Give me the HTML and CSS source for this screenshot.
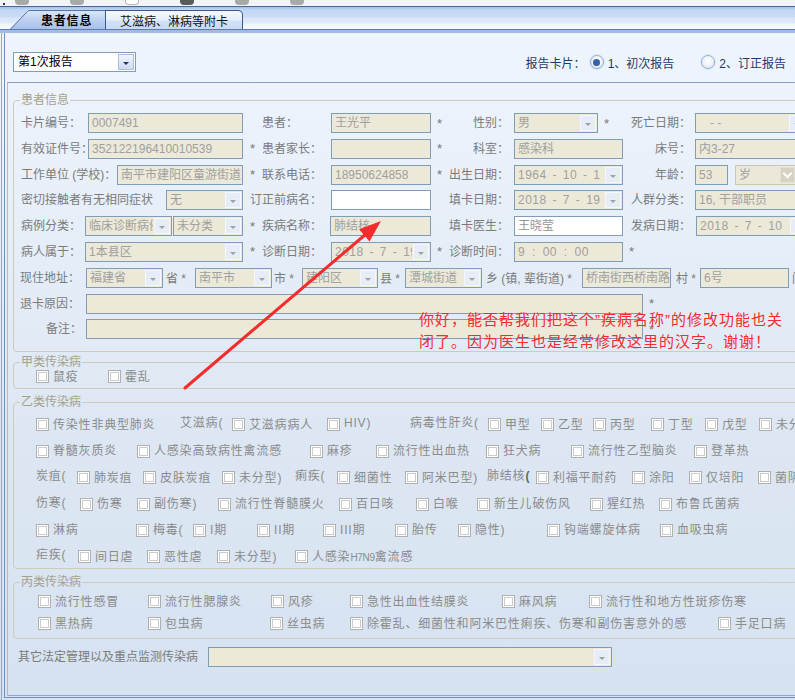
FILE: index.html
```html
<!DOCTYPE html>
<html lang="zh-CN">
<head>
<meta charset="utf-8">
<title>患者信息</title>
<link rel="stylesheet" href="styles.css">
</head>
<body>
<div class="toolbar">
  <span class="tb-dot"></span>
  <span class="tb tb-first"></span>
  <span class="tb"></span>
  <span class="tb tb-white"></span>
  <span class="tb tb-dark"></span>
  <span class="tb"></span>
  <span class="tb"></span>
</div>
<div class="tabstrip">
  <div class="tab tab-active">
    <svg class="tab-shape" width="95" height="19" viewBox="0 0 95 19">
      <defs>
        <linearGradient id="tg" x1="0" y1="0" x2="0" y2="1">
          <stop offset="0" stop-color="#dae7f9"/>
          <stop offset="0.5" stop-color="#bcd1f0"/>
          <stop offset="1" stop-color="#a7c1ea"/>
        </linearGradient>
      </defs>
      <path d="M0,19 L17.5,1.5 Q18.5,0.5 20,0.5 L95,0.5 L95,19 Z" fill="url(#tg)"/>
      <path d="M0.5,19 L17.5,1.5 Q18.5,0.5 20,0.5 L95,0.5" fill="none" stroke="#5673a8" stroke-width="1"/>
    </svg>
    <span class="tab-label">患者信息</span>
  </div>
  <div class="tab tab-second"><span>艾滋病、淋病等附卡</span></div>
</div>
<div class="tabpage">
  <div class="band"></div>
  <div class="frame">
    <div class="inner">
      <div class="topbar">
        <div class="sel sel-top"><span class="v">第1次报告</span><span class="b"></span></div>
        <div class="report">
          <span>报告卡片：</span>
          <span class="radio on"></span><span class="rlab">1、初次报告</span>
          <span class="radio r2"></span><span class="rlab">2、订正报告</span>
        </div>
      </div>
      <div class="panel">
        <fieldset class="fs fs-patient">
          <legend>患者信息</legend>
          <div class="pform">
            <div class="pgrid">
              <!-- row 1 -->
              <div class="c c1"><span class="lab">卡片编号：</span></div>
              <div class="c"><span class="inp f-wide">0007491</span></div>
              <div class="c c3"><span class="star"></span><span class="lab">患者：</span></div>
              <div class="c"><span class="inp f-mid">王光平</span></div>
              <div class="c c5"><span class="star">*</span><span class="lab">性别：</span></div>
              <div class="c"><div class="sel f-sex"><span class="v">男</span><span class="b"></span></div><span class="star star-after">*</span></div>
              <div class="c c7"><span class="lab">死亡日期：</span></div>
              <div class="c"><div class="sel f-c8"><span class="v v-death">-    -</span><span class="b"></span></div></div>
              <!-- row 2 -->
              <div class="c c1"><span class="lab">有效证件号：</span></div>
              <div class="c"><span class="inp f-wide">352122196410010539</span></div>
              <div class="c c3"><span class="star">*</span><span class="lab">患者家长：</span></div>
              <div class="c"><span class="inp f-mid"></span></div>
              <div class="c c5"><span class="star">*</span><span class="lab">科室：</span></div>
              <div class="c"><span class="inp f-c6">感染科</span></div>
              <div class="c c7"><span class="lab">床号：</span></div>
              <div class="c"><span class="inp f-c8">内3-27</span></div>
              <!-- row 3 -->
              <div class="c c1 span2"><span class="lab">工作单位 (学校)：</span><span class="inp f-work field-end">南平市建阳区童游街道:</span></div>
              <div class="c c3"><span class="star">*</span><span class="lab">联系电话：</span></div>
              <div class="c"><span class="inp f-mid">18950624858</span></div>
              <div class="c c5"><span class="star">*</span><span class="lab">出生日期：</span></div>
              <div class="c"><div class="sel f-c6"><span class="v date">1964 - 10 - 1</span><span class="b"></span></div></div>
              <div class="c c7"><span class="lab">年龄：</span></div>
              <div class="c"><span class="inp f-age">53</span><div class="sel sel-age"><span class="v">岁</span><span class="b b-chev"></span></div></div>
              <!-- row 4 -->
              <div class="c c1 span2"><span class="lab">密切接触者有无相同症状</span><div class="sel f-contact field-end"><span class="v">无</span><span class="b"></span></div></div>
              <div class="c c3"><span class="lab">订正前病名：</span></div>
              <div class="c"><span class="inp white f-mid"></span></div>
              <div class="c c5"><span class="lab">填卡日期：</span></div>
              <div class="c"><div class="sel f-c6"><span class="v date">2018 - 7 - 19</span><span class="b"></span></div></div>
              <div class="c c7"><span class="lab">人群分类：</span></div>
              <div class="c"><span class="inp f-c8">16, 干部职员</span></div>
              <!-- row 5 -->
              <div class="c c1"><span class="lab">病例分类：</span></div>
              <div class="c"><div class="sel f-cls1"><span class="v">临床诊断病例</span><span class="b"></span></div><div class="sel f-cls2"><span class="v">未分类</span><span class="b"></span></div></div>
              <div class="c c3"><span class="star">*</span><span class="lab">疾病名称：</span></div>
              <div class="c"><span class="inp f-mid f-shift">肺结核</span></div>
              <div class="c c5"><span class="lab">填卡医生：</span></div>
              <div class="c"><span class="inp white f-c6">王晓莹</span></div>
              <div class="c c7"><span class="lab">发病日期：</span></div>
              <div class="c"><div class="sel f-c8 f-nudge"><span class="v date">2018 - 7 - 10</span><span class="b"></span></div></div>
              <!-- row 6 -->
              <div class="c c1"><span class="lab">病人属于：</span></div>
              <div class="c"><div class="sel f-belong"><span class="v">1本县区</span><span class="b"></span></div></div>
              <div class="c c3"><span class="star">*</span><span class="lab">诊断日期：</span></div>
              <div class="c"><div class="sel f-mid"><span class="v date">2018 - 7 - 19</span><span class="b"></span></div></div>
              <div class="c c5"><span class="star">*</span><span class="lab">诊断时间：</span></div>
              <div class="c"><span class="inp f-c6 time">9 : 00 : 00</span></div>
              <div class="c c7"><span class="star">*</span></div>
              <div class="c"></div>
            </div>
            <div class="prow">
              <span class="lab lab66">现住地址：</span>
              <div class="sel f-addr"><span class="v">福建省</span><span class="b"></span></div>
              <span class="sep sep-prov">省 *</span>
              <div class="sel f-addr"><span class="v">南平市</span><span class="b"></span></div>
              <span class="sep sep-city">市 *</span>
              <div class="sel f-addr76"><span class="v">建阳区</span><span class="b"></span></div>
              <span class="sep sep-county">县 *</span>
              <div class="sel f-addr"><span class="v">潭城街道</span><span class="b"></span></div>
              <span class="sep sep-town">乡 (镇, 辈街道) *</span>
              <span class="inp f-street">桥南街西桥南路</span>
              <span class="sep sep-vil">村 *</span>
              <span class="inp f-street">6号</span>
              <span class="sep sep-door">门</span>
            </div>
            <div class="prow">
              <span class="lab lab66">退卡原因：</span>
              <span class="inp f-reason"></span>
              <span class="star star-after">*</span>
            </div>
            <div class="prow">
              <span class="lab lab66 right">备注：</span>
              <span class="inp f-reason"></span>
              <span class="star star-after">*</span>
            </div>
          </div>
        </fieldset>

        <fieldset class="fs fs-a">
          <legend>甲类传染病</legend>
          <div class="ckrow ra">
            <span class="ck"><i class="cb"></i>鼠疫</span>
            <span class="ck"><i class="cb"></i>霍乱</span>
          </div>
        </fieldset>

        <fieldset class="fs fs-b">
          <legend>乙类传染病</legend>
          <div class="ckrows">
            <div class="ckrow rb1">
              <span class="ck"><i class="cb"></i>传染性非典型肺炎</span>
              <span class="tx">艾滋病(</span>
              <span class="ck"><i class="cb"></i>艾滋病病人</span>
              <span class="ck"><i class="cb"></i>HIV)</span>
              <span class="tx">病毒性肝炎(</span>
              <span class="ck"><i class="cb"></i>甲型</span>
              <span class="ck"><i class="cb"></i>乙型</span>
              <span class="ck"><i class="cb"></i>丙型</span>
              <span class="ck"><i class="cb"></i>丁型</span>
              <span class="ck"><i class="cb"></i>戊型</span>
              <span class="ck"><i class="cb"></i>未分型)</span>
            </div>
            <div class="ckrow rb2">
              <span class="ck"><i class="cb"></i>脊髓灰质炎</span>
              <span class="ck"><i class="cb"></i>人感染高致病性禽流感</span>
              <span class="ck"><i class="cb"></i>麻疹</span>
              <span class="ck"><i class="cb"></i>流行性出血热</span>
              <span class="ck"><i class="cb"></i>狂犬病</span>
              <span class="ck"><i class="cb"></i>流行性乙型脑炎</span>
              <span class="ck"><i class="cb"></i>登革热</span>
            </div>
            <div class="ckrow rb3">
              <span class="tx">炭疽(</span>
              <span class="ck"><i class="cb"></i>肺炭疽</span>
              <span class="ck"><i class="cb"></i>皮肤炭疽</span>
              <span class="ck"><i class="cb"></i>未分型)</span>
              <span class="tx">痢疾(</span>
              <span class="ck"><i class="cb"></i>细菌性</span>
              <span class="ck"><i class="cb"></i>阿米巴型)</span>
              <span class="tx">肺结核<b class="paren">(</b></span>
              <span class="ck"><i class="cb"></i>利福平耐药</span>
              <span class="ck"><i class="cb"></i>涂阳</span>
              <span class="ck"><i class="cb"></i>仅培阳</span>
              <span class="ck"><i class="cb"></i>菌阴</span>
            </div>
            <div class="ckrow rb4">
              <span class="tx">伤寒(</span>
              <span class="ck"><i class="cb"></i>伤寒</span>
              <span class="ck"><i class="cb"></i>副伤寒)</span>
              <span class="ck"><i class="cb"></i>流行性脊髓膜火</span>
              <span class="ck"><i class="cb"></i>百日咳</span>
              <span class="ck"><i class="cb"></i>白喉</span>
              <span class="ck"><i class="cb"></i>新生儿破伤风</span>
              <span class="ck"><i class="cb"></i>猩红热</span>
              <span class="ck"><i class="cb"></i>布鲁氏菌病</span>
            </div>
            <div class="ckrow rb5">
              <span class="ck"><i class="cb"></i>淋病</span>
              <span class="ck"><i class="cb"></i>梅毒(</span>
              <span class="ck"><i class="cb"></i>I期</span>
              <span class="ck"><i class="cb"></i>II期</span>
              <span class="ck"><i class="cb"></i>III期</span>
              <span class="ck"><i class="cb"></i>胎传</span>
              <span class="ck"><i class="cb"></i>隐性)</span>
              <span class="ck"><i class="cb"></i>钩端螺旋体病</span>
              <span class="ck"><i class="cb"></i>血吸虫病</span>
            </div>
            <div class="ckrow rb6">
              <span class="tx">疟疾(</span>
              <span class="ck"><i class="cb"></i>间日虐</span>
              <span class="ck"><i class="cb"></i>恶性虐</span>
              <span class="ck"><i class="cb"></i>未分型)</span>
              <span class="ck"><i class="cb"></i><span class="ck-text">人感染<span class="narrow">H7N9</span>禽流感</span></span>
            </div>
          </div>
        </fieldset>

        <fieldset class="fs fs-c">
          <legend>丙类传染病</legend>
          <div class="ckrows ckrows-c">
            <div class="ckrow rc1">
              <span class="ck"><i class="cb"></i>流行性感冒</span>
              <span class="ck"><i class="cb"></i>流行性腮腺炎</span>
              <span class="ck"><i class="cb"></i>风疹</span>
              <span class="ck"><i class="cb"></i>急性出血性结膜炎</span>
              <span class="ck"><i class="cb"></i>麻风病</span>
              <span class="ck"><i class="cb"></i>流行性和地方性斑疹伤寒</span>
            </div>
            <div class="ckrow rc2">
              <span class="ck"><i class="cb"></i>黑热病</span>
              <span class="ck"><i class="cb"></i>包虫病</span>
              <span class="ck"><i class="cb"></i>丝虫病</span>
              <span class="ck"><i class="cb"></i>除霍乱、细菌性和阿米巴性痢疾、伤寒和副伤害意外的感</span>
              <span class="ck"><i class="cb"></i>手足口病</span>
            </div>
          </div>
        </fieldset>

        <div class="other">
          <span class="lab other-lab">其它法定管理以及重点监测传染病</span>
          <div class="sel sel-other"><span class="v"></span><span class="b"></span></div>
        </div>
      </div>
    </div>
  </div>
</div>

<div class="note">你好，能否帮我们把这个”疾病名称”的修改功能也关<br>闭了。因为医生也是经常修改这里的汉字。谢谢！</div>

<svg class="arrow" width="795" height="700" viewBox="0 0 795 700">
  <line x1="185" y1="388" x2="366" y2="234" stroke="#f42c2c" stroke-width="3" stroke-linecap="round"/>
  <polygon points="381,221 369.5,241.4 359.1,229.2" fill="#f42c2c"/>
</svg>
</body>
</html>
```

FILE: styles.css
```css
* { box-sizing: border-box; }
html, body { margin: 0; padding: 0; }
body {
  width: 795px;
  height: 700px;
  overflow: hidden;
  position: relative;
  background: #eef0f4;
  font-family: "Liberation Sans", "Noto Sans CJK SC", sans-serif;
  font-size: 12px;
  color: #7b7b7b;
}

/* toolbar remnants */
.toolbar { height: 6px; display: flex; align-items: flex-start; background: #f2f3f5; }
.tb-dot { width: 2px; height: 2px; margin: 3px 0 0 3px; background: #333; }
.tb { width: 14px; height: 5px; border-radius: 0 0 4px 4px; background: #a9a9a9; }
.tb-first { margin-left: 10px; }
.tb + .tb { margin-left: 41px; }
.tb-white { background: #fff; border: 1px solid #b8b8b8; border-top: 0; }
.tb-dark { background: #5a5a5a; }

/* tabs */
.tabstrip {
  height: 23px;
  border-top: 1px solid #46679f;
  background: linear-gradient(#a2bfea 0, #c3d7f4 3px, #cadcf5 10px, #d9e6f8 11px, #dfe9f9 16px, #f1f6fd 17px, #f6f9fe 22px);
  display: flex;
  align-items: flex-end;
  padding-left: 10px;
}
.tab { height: 19px; display: flex; align-items: center; position: relative; }
.tab-active { width: 95px; }
.tab-shape { position: absolute; left: 0; top: 0; }
.tab-label { position: relative; margin-left: 31px; font-weight: bold; color: #000; letter-spacing: 0.8px; }
.tab-second {
  width: 138px;
  justify-content: center;
  border: 1px solid #3a5991;
  border-bottom: 0;
  border-radius: 0 5px 0 0;
  background: linear-gradient(#f5f8fe, #e6eefb 9px, #d2e1f6 10px, #c8daf4);
  color: #111;
}

/* tab page frame */
.tabpage {
  height: 671px;
  border-top: 1px solid #5a7db8;
  background: linear-gradient(#eff5fd, #dde7f3 60%, #d7e2f1);
}
.band { height: 3px; background: #a3bbe1; }
.frame { height: 667px; margin-left: 1px; border-left: 1px solid #8ea7cf; padding-left: 2px; }
.inner { height: 665px; border-left: 1px solid #6f8ec1; border-bottom: 1px solid #7592c2; }

.topbar { height: 49px; padding-top: 9px; display: flex; align-items: center; }
.report { margin-left: auto; margin-right: 9px; display: flex; align-items: center; color: #1d3a6c; }
.radio {
  width: 14px; height: 14px; flex: none;
  border-radius: 50%;
  border: 1px solid #8eaedb;
  box-shadow: 0 0 0 1px #dbe6f6;
  background: radial-gradient(circle at 50% 40%, #ffffff 0, #eceff3 60%, #d9dfe8 100%);
  display: flex; align-items: center; justify-content: center;
  margin-left: 4px;
}
.radio.on::after { content: ""; width: 7px; height: 7px; border-radius: 50%; background: #3760a8; }
.r2 { margin-left: 27px; }
.rlab { margin-left: 4px; }

.panel {
  height: 614px;
  margin-left: 2px;
  padding-top: 11px;
  border-top: 1px solid #89a4cb;
  border-left: 1px solid #a7bcdb;
  border-bottom: 1px solid #8ea7ce;
  overflow: hidden;
}

/* controls */
.inp {
  display: block;
  flex: none;
  height: 20px;
  border: 1px solid #7f9db9;
  background: #ece9d8;
  color: #a0a0a0;
  padding-left: 3px;
  line-height: 18px;
  overflow: hidden;
  white-space: nowrap;
}
.inp.white { background: #fff; color: #949494; }
.sel {
  display: flex;
  flex: none;
  height: 20px;
  border: 1px solid #7f9db9;
  background: #ece9d8;
}
.sel .v {
  flex: 1;
  min-width: 0;
  padding-left: 3px;
  line-height: 18px;
  color: #a0a0a0;
  overflow: hidden;
  white-space: nowrap;
}
.sel .b {
  flex: none;
  width: 16px;
  margin: 1px;
  background: #e6ecf8;
  border: 1px solid #f4f7fc;
  display: flex; align-items: center; justify-content: center;
}
.sel .b::after {
  content: "";
  width: 0; height: 0;
  margin-top: 3px;
  border-left: 3px solid transparent;
  border-right: 3px solid transparent;
  border-top: 3px solid #a0a0a0;
}
.sel-top { width: 123px; margin-left: 8px; background: #fff; }
.sel-top .v { color: #000; padding-left: 4px; }
.sel-top .b { background: linear-gradient(#f1f5fc, #cddbf0); border: 1px solid #a9bedf; }
.sel-top .b::after { border-top-color: #1f3564; margin-top: 2px; }
.sel-age { width: 62px; margin-left: 7px; border-color: #cbc7b7; background: #ebe8d9; }
.sel-age .b.b-chev { background: #d6d2c2; border-color: #e4e1d4; width: 15px; }
.sel-age .b.b-chev::after {
  width: 5px; height: 5px;
  margin-top: -2px;
  border: 0;
  border-right: 2px solid #fff;
  border-bottom: 2px solid #fff;
  transform: rotate(45deg);
}
.date { letter-spacing: 0.5px; word-spacing: 2px; }
.time { letter-spacing: 0.5px; word-spacing: 3px; }
.v-death { white-space: pre; padding-left: 14px !important; }

/* fieldsets */
.fs {
  display: block;
  margin: 0 0 0 5px;
  width: 820px;
  min-width: 0;
  border: 1px solid #cfcbba;
  border-radius: 4px;
  padding: 0 0 0 6px;
}
.fs legend { padding: 0 1px; height: 12px; line-height: 12px; color: #a6a18b; }
.fs-patient { padding-top: 7px; padding-bottom: 12px; }
.fs-a { margin-top: 4px; padding-bottom: 3px; }
.fs-b { margin-top: 7px; padding-top: 5px; padding-bottom: 3px; }
.fs-c { margin-top: 7px; padding-top: 2px; padding-bottom: 6px; }

/* patient form */
.pform { display: flex; flex-direction: column; gap: 5.8px; }
.pgrid {
  display: grid;
  grid-template-columns: 66px 158px 87px 101px 81px 111px 71px 110px;
  grid-auto-rows: 20px;
  row-gap: 5.8px;
}
.c { display: flex; align-items: center; white-space: nowrap; min-width: 0; }
.c1 { padding-left: 1px; }
.c3 { padding-left: 6px; }
.c5, .c7 { padding-left: 5px; padding-right: 4px; }
.c5 .lab, .c7 .lab { margin-left: auto; }
.span2 { grid-column: span 2; }
.field-end { margin-left: auto; margin-right: 1px; }
.lab { line-height: 20px; white-space: nowrap; }
.star { width: 12px; flex: none; color: #777; font-size: 13px; }
.star-after { margin-left: 6px; }

.f-wide { width: 155px; margin-left: 2px; }
.f-mid { width: 100px; }
.f-shift { margin-left: -1px; width: 101px; }
.f-c6 { width: 109px; margin-left: 1px; }
.f-sex { width: 84px; margin-left: 1px; }
.f-c8 { width: 112px; }
.f-nudge { margin-left: 1px; }
.f-age { width: 33px; }
.f-work { width: 126px; }
.f-contact { width: 77px; }
.f-cls1 { width: 87px; margin-left: -1px; }
.f-cls2 { width: 70px; margin-left: 1px; }
.f-belong { width: 158px; margin-left: -1px; }

.prow { display: flex; align-items: center; height: 20px; white-space: nowrap; }
.lab66 { width: 66px; flex: none; }
.lab66.right { text-align: right; padding-right: 4px; }
.sep { flex: none; white-space: nowrap; }
.sep-prov { width: 32px; padding-left: 3px; }
.sep-city { width: 30px; padding-left: 2px; }
.sep-county { width: 27px; padding-left: 2px; }
.sep-town { width: 100px; padding-left: 4px; }
.sep-vil { width: 29px; padding-left: 5px; }
.sep-door { margin-left: 3px; }
.f-addr { width: 77px; }
.f-addr76 { width: 76px; }
.f-street { width: 89px; }
.f-reason { width: 557px; }

/* checkbox rows */
.ckrows { display: flex; flex-direction: column; gap: 6.4px; }
.ckrows-c { gap: 2px; }
.ckrow {
  display: grid;
  grid-auto-flow: column;
  align-items: center;
  height: 20px;
  margin-left: 16px;
  white-space: nowrap;
  color: #8b8b8b;
  letter-spacing: 0.8px;
}
.ckrows-c .ckrow { margin-left: 18px; }
.ra { margin-top: -3px; grid-template-columns: 72px auto; }
.rb1 { grid-template-columns: 144px 52px 95px 83px 78px 53px 52px 58px 54px 54px auto; }
.rb2 { grid-template-columns: 101px 173px 66px 110px 85px 123px auto; }
.rb3 { grid-template-columns: 41px 66px 79px 73px 42px 68px 82px 49px 96px 57px 69px auto; }
.rb4 { grid-template-columns: 44px 57px 81px 121px 77px 61px 113px 69px auto; }
.rb5 { grid-template-columns: 100px 57px 64px 66px 72px 63px 89px 113px auto; }
.rb6 { grid-template-columns: 42px 69px 70px 78px auto; }
.rc1 { grid-template-columns: 110px 123px 79px 152px 87px auto; }
.rc2 { grid-template-columns: 110px 122px 80px 368px auto; }
.ck { display: flex; align-items: center; gap: 4px; }
.tx { line-height: 20px; }
.paren { font-weight: bold; color: #666; }
.narrow { letter-spacing: -0.3px; font-size: 10px; }
.cb {
  display: block;
  flex: none;
  width: 13px;
  height: 13px;
  margin-top: 3px;
  border: 1px solid #b0b0b0;
  background: #fff;
  box-shadow: inset 0 0 0 1px #fff, inset 0 0 0 2px #cbcbcb;
}

/* other */
.other { display: flex; align-items: center; height: 20px; margin: 8px 0 0 10px; }
.other-lab { width: 190px; flex: none; }
.sel-other { width: 404px; }

/* annotation overlays */
.note {
  position: absolute;
  left: 419px;
  top: 309px;
  font-family: "Liberation Sans", "Noto Sans CJK SC", sans-serif;
  font-size: 15px;
  line-height: 22px;
  letter-spacing: 1px;
  color: #f42c2c;
  white-space: nowrap;
}
.arrow { position: absolute; left: 0; top: 0; pointer-events: none; }
```
